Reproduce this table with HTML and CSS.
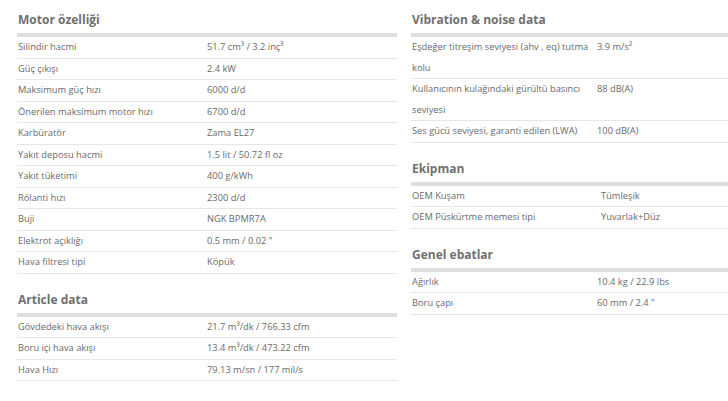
FILE: index.html
```html
<!DOCTYPE html>
<html>
<head>
<meta charset="utf-8">
<link rel="stylesheet" href="styles.css">
</head>
<body>
<div class="page">
  <div class="col col-left">
    <section class="sec">
      <h2>Motor özelliği</h2>
      <div class="row"><span class="k">Silindir hacmi</span><span class="v">51.7 cm³ / 3.2 inç³</span></div>
      <div class="row"><span class="k">Güç çıkışı</span><span class="v">2.4 kW</span></div>
      <div class="row"><span class="k">Maksimum güç hızı</span><span class="v">6000 d/d</span></div>
      <div class="row"><span class="k">Önerilen maksimum motor hızı</span><span class="v">6700 d/d</span></div>
      <div class="row"><span class="k">Karbüratör</span><span class="v">Zama EL27</span></div>
      <div class="row"><span class="k">Yakıt deposu hacmi</span><span class="v">1.5 lit / 50.72 fl oz</span></div>
      <div class="row"><span class="k">Yakıt tüketimi</span><span class="v">400 g/kWh</span></div>
      <div class="row"><span class="k">Rölanti hızı</span><span class="v">2300 d/d</span></div>
      <div class="row"><span class="k">Buji</span><span class="v">NGK BPMR7A</span></div>
      <div class="row"><span class="k">Elektrot açıklığı</span><span class="v">0.5 mm / 0.02 "</span></div>
      <div class="row"><span class="k">Hava filtresi tipi</span><span class="v">Köpük</span></div>
    </section>
    <section class="sec">
      <h2>Article data</h2>
      <div class="row"><span class="k">Gövdedeki hava akışı</span><span class="v">21.7 m³/dk / 766.33 cfm</span></div>
      <div class="row"><span class="k">Boru içi hava akışı</span><span class="v">13.4 m³/dk / 473.22 cfm</span></div>
      <div class="row"><span class="k">Hava Hızı</span><span class="v">79.13 m/sn / 177 mil/s</span></div>
    </section>
  </div>
  <div class="col col-right">
    <section class="sec sec-narrow">
      <h2>Vibration &amp; noise data</h2>
      <div class="row"><span class="k">Eşdeğer titreşim seviyesi (ahv , eq) tutma kolu</span><span class="v">3.9 m/s²</span></div>
      <div class="row"><span class="k">Kullanıcının kulağındaki gürültü basıncı seviyesi</span><span class="v">88 dB(A)</span></div>
      <div class="row"><span class="k">Ses gücü seviyesi, garanti edilen (LWA)</span><span class="v">100 dB(A)</span></div>
    </section>
    <section class="sec">
      <h2>Ekipman</h2>
      <div class="row"><span class="k">OEM Kuşam</span><span class="v">Tümleşik</span></div>
      <div class="row"><span class="k">OEM Püskürtme memesi tipi</span><span class="v">Yuvarlak+Düz</span></div>
    </section>
    <section class="sec sec-narrow">
      <h2>Genel ebatlar</h2>
      <div class="row"><span class="k">Ağırlık</span><span class="v">10.4 kg / 22.9 lbs</span></div>
      <div class="row"><span class="k">Boru çapı</span><span class="v">60 mm / 2.4 "</span></div>
    </section>
  </div>
</div>
</body>
</html>
```

FILE: styles.css
```css
html, body {
  margin: 0;
  padding: 0;
  background: #fff;
}
body {
  font-family: "Open Sans", "DejaVu Sans", sans-serif;
  color: #666;
  overflow: hidden;
}
.page {
  display: flex;
  gap: 14px;
  padding-left: 17px;
  width: 728px;
  box-sizing: border-box;
}
.col-left {
  width: 380px;
  flex: none;
}
.col-right {
  flex: 1;
  min-width: 0;
}
.sec {
  margin-bottom: 6px;
}
.sec h2 {
  margin: 0;
  font-size: 12px;
  font-weight: 700;
  line-height: 16px;
  color: #707070;
  padding: 12px 1px 5px;
  border-bottom: 4px solid #dedede;
}
.row {
  display: flex;
  border-bottom: 1px solid #e6e6e6;
  font-size: 9.3px;
  line-height: 20.5px;
  color: #6a6a6a;
}
.k {
  width: 190px;
  flex: none;
  padding-left: 1px;
  box-sizing: border-box;
}
.sec-narrow .k {
  width: 186px;
  padding-right: 4px;
}
.v {
  flex: 1;
}
```
